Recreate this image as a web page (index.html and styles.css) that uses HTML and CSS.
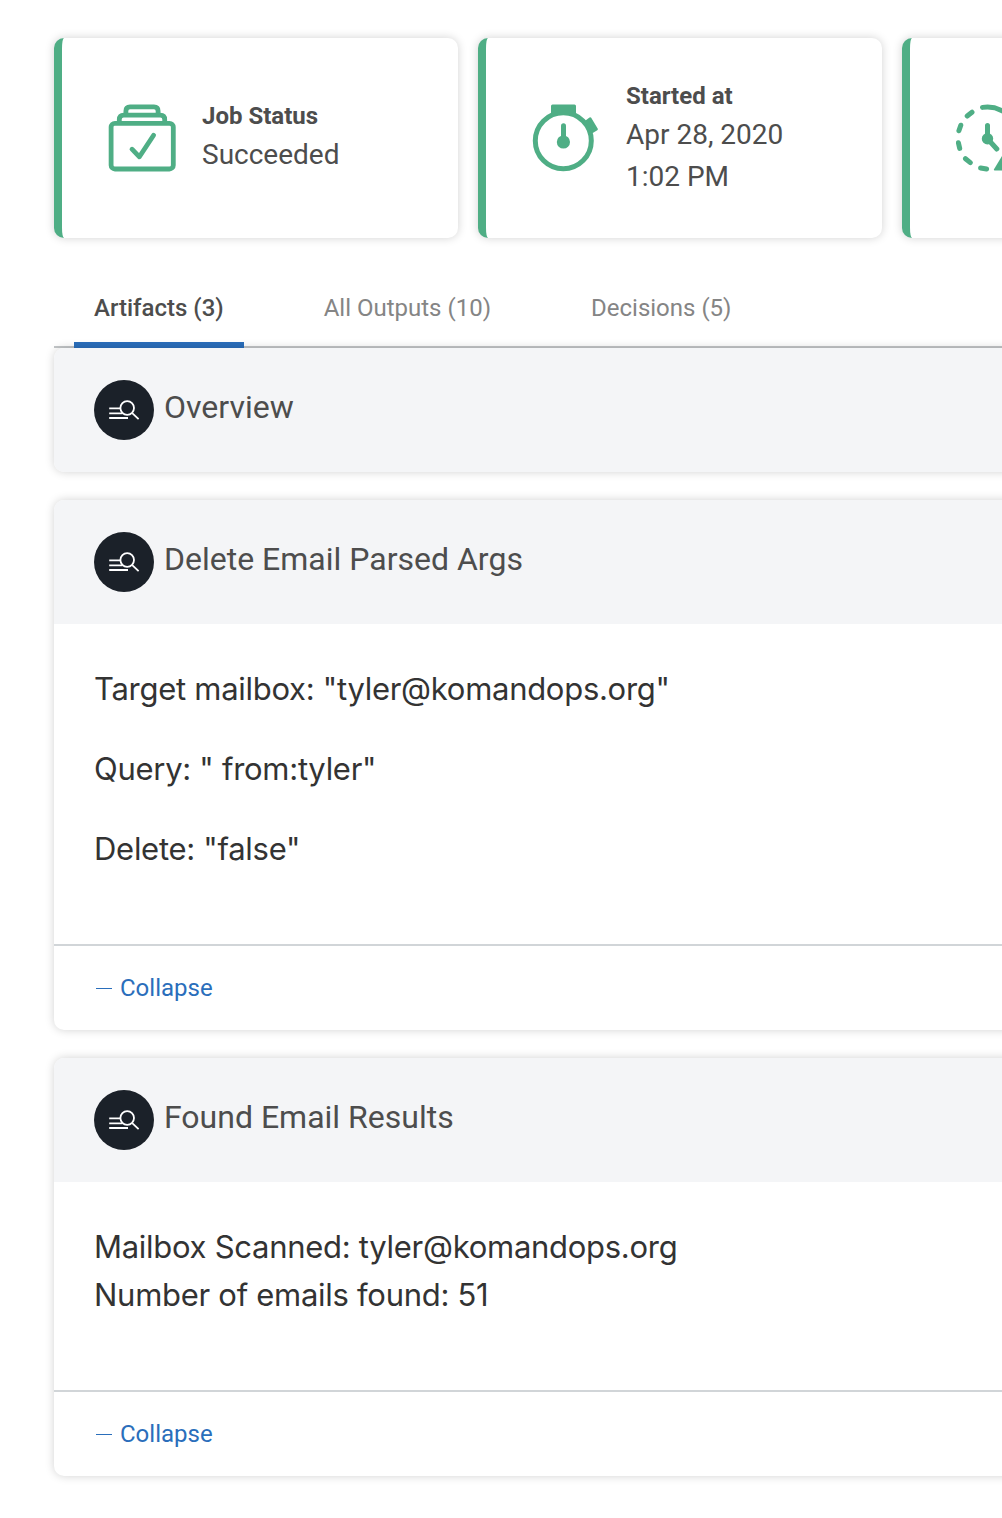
FILE: index.html
```html
<!DOCTYPE html>
<html lang="en">
<head>
<meta charset="utf-8">
<title>Job Details</title>
<link rel="stylesheet" href="styles.css">
</head>
<body>
<svg class="defs" width="0" height="0" aria-hidden="true">
  <symbol id="artifact" viewBox="0 0 60 60">
    <g fill="none" stroke="#fff" stroke-width="1.8">
      <path d="M15.2 28.4H26M15.2 33.4H28.5M15.2 38H34"/>
      <circle cx="33.2" cy="28" r="6.8"/>
      <path d="M38.2 33.2 44.6 39.2"/>
    </g>
  </symbol>
</svg>
<main class="page">
  <section class="stats">
    <article class="stat">
      <svg class="stat-icon" viewBox="0 0 68 68" fill="none" stroke="#4fae85" stroke-width="4.8" stroke-linecap="round" stroke-linejoin="round">
        <rect x="3.1" y="19.3" width="62.2" height="45.7" rx="3.8"/>
        <path d="M11.3 18.5V15.5Q11.3 11.1 15.7 11.1H52.3Q56.7 11.1 56.7 15.5V18.5"/>
        <path d="M17.9 10.5V7Q17.9 2.9 22 2.9H46Q50.1 2.9 50.1 7V10.5"/>
        <path d="M24 45.2 31.4 52.8 45.6 31.2"/>
      </svg>
      <div class="stat-text"><h2>Job Status</h2><p>Succeeded</p></div>
    </article>
    <article class="stat">
      <svg class="stat-icon" viewBox="0 0 68 68" fill="#4fae85">
        <circle cx="31.3" cy="36.7" r="28" fill="none" stroke="#4fae85" stroke-width="5"/>
        <path d="M20.5.4H42.5Q44 .4 44 2V11H19V2Q19 .4 20.5.4ZM52.5 17.3 57.5 13.5Q58.6 12.8 59.2 13.8L65.8 24.7Q66.2 25.6 65.3 26.2L60.3 29.3Z"/>
        <path d="M31.5 21.8V38" fill="none" stroke="#4fae85" stroke-width="5" stroke-linecap="round"/>
        <circle cx="31.4" cy="38" r="6.6"/>
      </svg>
      <div class="stat-text stat-text-tall"><h2>Started at</h2><p>Apr 28, 2020<br>1:02 PM</p></div>
    </article>
    <article class="stat">
      <svg class="stat-icon" viewBox="0 0 68 68" fill="#4fae85">
        <path fill="none" stroke="#4fae85" stroke-width="5" stroke-linecap="round" d="M26.5 3.4A31 31 0 0 1 51 58M11.2 12 16 8.2M4.8 21.2 2.9 26.8M2.4 38.8 3.7 44.4M9.5 54.7 14.3 58.6M24.6 64 30.6 65M31.5 21.4V34.7L40.8 45"/>
        <circle cx="31.5" cy="34.7" r="5.7"/>
        <path d="M38 65.2 46.5 51.3 55.5 66.4H38.6Q37.5 66.4 38 65.2Z"/>
      </svg>
    </article>
  </section>

  <nav class="tabs">
    <a class="tab tab-active">Artifacts (3)</a>
    <a class="tab">All Outputs (10)</a>
    <a class="tab">Decisions (5)</a>
  </nav>

  <section class="artifacts">
    <article class="card">
      <header class="card-head"><svg class="badge"><use href="#artifact"/></svg><h3>Overview</h3></header>
    </article>
    <article class="card">
      <header class="card-head"><svg class="badge"><use href="#artifact"/></svg><h3>Delete Email Parsed Args</h3></header>
      <div class="card-body">
        <p>Target mailbox: "tyler@komandops.org"</p>
        <p>Query: " from:tyler"</p>
        <p>Delete: "false"</p>
      </div>
      <footer class="card-foot"><span class="minus"></span>Collapse</footer>
    </article>
    <article class="card">
      <header class="card-head"><svg class="badge"><use href="#artifact"/></svg><h3>Found Email Results</h3></header>
      <div class="card-body">
        <p>Mailbox Scanned: tyler@komandops.org<br>Number of emails found: 51</p>
      </div>
      <footer class="card-foot"><span class="minus"></span>Collapse</footer>
    </article>
  </section>
</main>
</body>
</html>
```
FILE: styles.css
```css
* { box-sizing: border-box; }
body { margin: 0; background: #fff; color: #4d4d4d; font-family: Roboto, sans-serif; }
h2, h3, p { margin: 0; }
.defs { display: block; }
.page { height: 1518px; padding: 38px 0 0 54px; overflow: hidden; }

.stats { display: flex; gap: 20px; }
.stat {
  flex: none; display: flex; align-items: center; gap: 26px;
  width: 404px; height: 200px; padding-left: 46px;
  background: #fff; border-left: 8px solid #4fae85; border-radius: 10px;
  box-shadow: 0 0 10px rgba(0, 0, 0, .18);
}
.stat-icon { width: 68px; height: 68px; }
.stat-text { padding-bottom: 2px; }
.stat-text-tall { padding-bottom: 0; }
.stat-text h2 { font-size: 24px; line-height: 36px; font-weight: 700; }
.stat-text p { font-size: 28px; line-height: 42px; }

.tabs { display: flex; gap: 60px; height: 110px; padding: 30px 0 0 20px; border-bottom: 2px solid #c3c6c8; }
.tab { height: 80px; padding: 22px 20px 0; font-size: 24px; line-height: 36px; color: #858585; }
.tab-active { font-weight: 500; color: #4d4d4d; border-bottom: 6px solid #2a6ebb; }

.artifacts { display: flex; flex-direction: column; gap: 28px; width: 1240px; }
.card { border-radius: 10px; background: #fff; box-shadow: 0 0 10px rgba(0, 0, 0, .18); }
.card-head { display: flex; align-items: center; gap: 10px; height: 124px; padding-left: 40px; background: #f4f5f7; border-radius: 10px; }
.card-head:not(:last-child) { border-radius: 10px 10px 0 0; }
.card-head h3 { font-size: 32px; line-height: 48px; font-weight: 400; padding-bottom: 6px; }
.badge { width: 60px; height: 60px; border-radius: 50%; background: #1b2129; }
.card-body { padding: 41px 40px 71px; font: 31px/48px Inter, sans-serif; letter-spacing: -.28px; color: #333; }
.card-body p + p { margin-top: 32px; }
.card-foot { display: flex; align-items: center; gap: 8px; height: 86px; padding: 0 42px; border-top: 2px solid #d1d5d8; color: #2a6ebb; font-size: 24px; }
.minus { width: 16px; height: 1px; background: #2a6ebb; }
```
